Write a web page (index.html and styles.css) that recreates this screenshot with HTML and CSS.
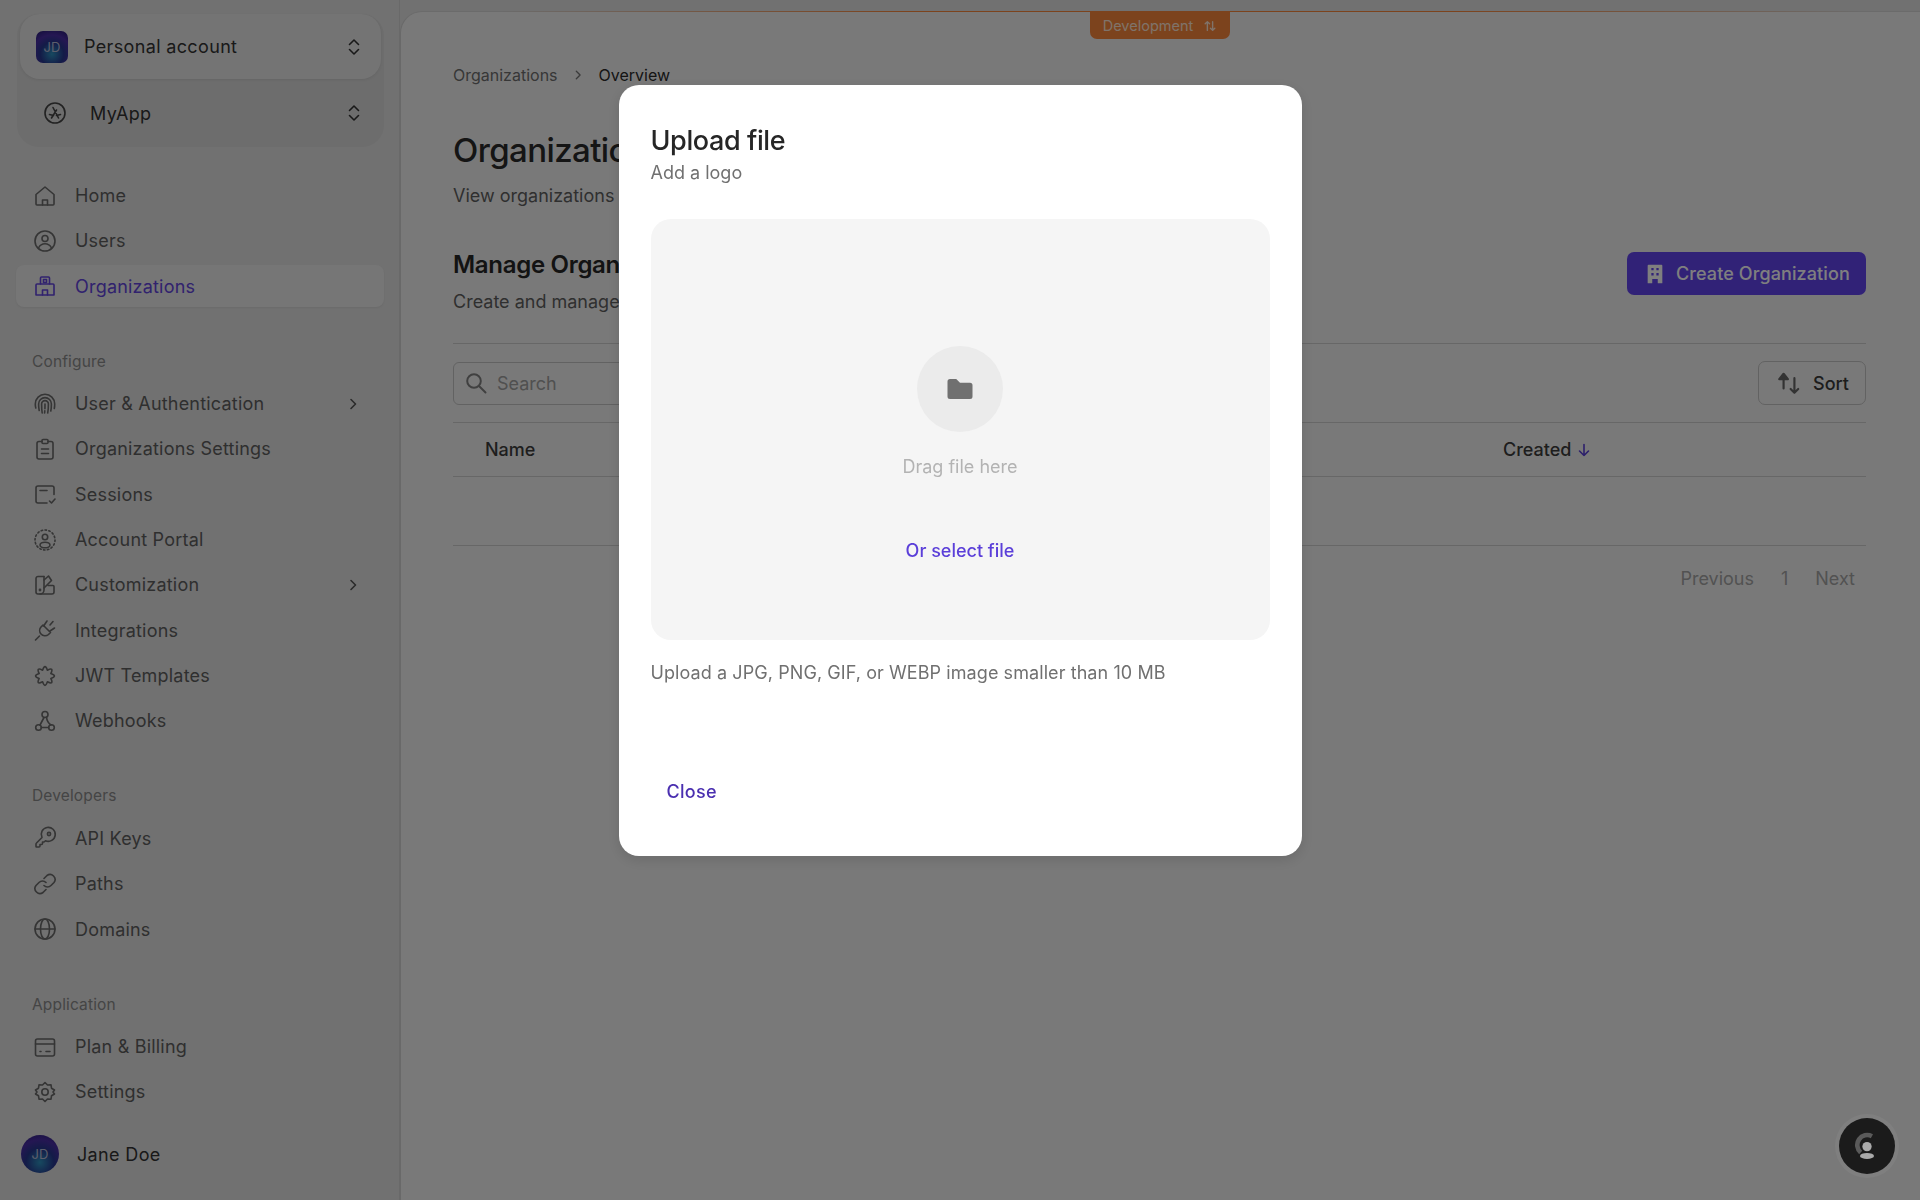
FILE: index.html
```html
<!DOCTYPE html>
<html lang="en">
<head>
    <meta charset="UTF-8">
    <title>Organizations</title>
    <link rel="stylesheet" href="styles.css">
</head>
<body>
<svg class="sprite" width="0" height="0">
    <symbol id="i-updown" viewBox="0 0 16 24"><path d="M3.5 9.5 8 5l4.500 4.500M3.500 14.500 8 19l4.500-4.500"/></symbol>
    <symbol id="i-right" viewBox="0 0 24 24"><path d="m10 7.500 4.500 4.500-4.500 4.500"/></symbol>
</svg>
<aside class="sidebar">
    <div class="switcher">
        <div class="switch-card">
            <span class="avatar square">JD</span>
            <span class="switch-name">Personal account</span>
            <svg class="updown"><use href="#i-updown"/></svg>
        </div>
        <div class="switch-app">
            <svg class="app-icon" viewBox="0 0 24 24"><circle cx="12" cy="12" r="10"/><path d="M10 6.500 15.500 17M13.500 9 8.500 17M6.500 13.500l4 1M17.500 13.500l-4 1"/></svg>
            <span class="switch-name">MyApp</span>
            <svg class="updown"><use href="#i-updown"/></svg>
        </div>
    </div>

    <nav class="nav first">
        <a class="nav-item"><svg viewBox="0 0 24 24"><path d="M3 10.500 12 3l9 7.500V20a1 1 0 0 1-1 1H4a1 1 0 0 1-1-1z"/><path d="M9.500 21v-5h5v5"/></svg>Home</a>
        <a class="nav-item"><svg viewBox="0 0 24 24"><circle cx="12" cy="12" r="10"/><circle cx="12" cy="9.500" r="3"/><path d="M5.500 19c1.500-3 3.800-4.200 6.500-4.200s5 1.200 6.500 4.200"/></svg>Users</a>
        <a class="nav-item active"><svg viewBox="0 0 24 24"><path d="M7.500 10V4a1 1 0 0 1 1-1h7a1 1 0 0 1 1 1v6"/><path d="M3 21V11a1 1 0 0 1 1-1h16a1 1 0 0 1 1 1v10z"/><path d="M9.500 21v-5h5v5"/><rect x="10.500" y="5.500" width="3" height="3"/></svg>Organizations</a>
    </nav>

    <div class="nav-label">Configure</div>
    <nav class="nav">
        <a class="nav-item"><svg viewBox="0 0 24 24"><path d="M2.800 16c-.4-1.300-.5-2.700-.5-4a9.700 9.700 0 0 1 19.400 0c0 1.800-.1 3.200-.4 4.500"/><path d="M6.200 18.500c-.4-2-.6-4.400-.6-6.500a6.400 6.400 0 0 1 12.800 0c0 2.800-.2 5-.6 7"/><path d="M9.200 21c-.4-2.800-.6-5.500-.6-9a3.400 3.400 0 0 1 6.800 0c0 3.200-.2 6.200-.7 9"/><path d="M12 12c0 3 0 5.500-.4 9" stroke-dasharray="5 2"/></svg>User &amp; Authentication<svg class="chev"><use href="#i-right"/></svg></a>
        <a class="nav-item"><svg viewBox="0 0 24 24"><path d="M9 4.500H6a2 2 0 0 0-2 2V20a2 2 0 0 0 2 2h12a2 2 0 0 0 2-2V6.500a2 2 0 0 0-2-2h-3"/><rect x="9" y="2.500" width="6" height="4" rx="1"/><path d="M8.500 12h7M8.500 16.500h7"/></svg>Organizations Settings</a>
        <a class="nav-item"><svg viewBox="0 0 24 24"><path d="M21 12.500V6a2 2 0 0 0-2-2H5a2 2 0 0 0-2 2v13a2 2 0 0 0 2 2h9"/><path d="M7 8.500h7"/><path d="m16.500 19 2 2 3.500-4"/></svg>Sessions</a>
        <a class="nav-item"><svg viewBox="0 0 24 24"><circle class="dotted" cx="12" cy="12" r="10"/><circle cx="12" cy="9" r="2.700"/><ellipse cx="12" cy="17" rx="5" ry="2.800"/></svg>Account Portal</a>
        <a class="nav-item"><svg viewBox="0 0 24 24"><path d="M11 3.500H5a2 2 0 0 0-2 2V19a2 2 0 0 0 2 2h14a2 2 0 0 0 2-2v-5.500a1 1 0 0 0-1-1h-5"/><path d="M11 3.500V17a4 4 0 0 1-4 4"/><path d="m11 15 7.500-7.500-3-4.500L11 7"/><circle cx="7" cy="17" r=".6"/></svg>Customization<svg class="chev"><use href="#i-right"/></svg></a>
        <a class="nav-item"><svg viewBox="0 0 24 24"><path d="m2.500 22 4-4"/><path d="m10 7 7.500 7.500-2 2a5.300 5.300 0 0 1-7.500-.5 5.300 5.300 0 0 1 0-7z"/><path d="m14 3-3.200 4.800M21.500 10l-4.500 3M17 7l3-3.500"/></svg>Integrations</a>
        <a class="nav-item"><svg viewBox="0 0 24 24"><path d="M17.820 9.590Q25 12 17.820 14.410Q21.190 21.190 14.410 17.820Q12 25 9.590 17.820Q2.810 21.190 6.180 14.410Q-1 12 6.180 9.590Q2.810 2.810 9.590 6.180Q12 -1 14.410 6.180Q21.190 2.810 17.820 9.590z"/></svg>JWT Templates</a>
        <a class="nav-item"><svg viewBox="0 0 24 24"><circle cx="12" cy="5.500" r="3"/><circle cx="5.500" cy="18.500" r="2.800"/><circle cx="18.500" cy="18.500" r="2.800"/><path d="M11 8.500 7 16M13.500 8c.3 3.500 2 6.500 4.500 8M8.300 18.500h7.400"/></svg>Webhooks</a>
    </nav>

    <div class="nav-label">Developers</div>
    <nav class="nav">
        <a class="nav-item"><svg viewBox="0 0 24 24"><path d="M9 11.500 3.500 17a1.500 1.500 0 0 0-.5 1v2.500a.5.500 0 0 0 .5.500H6a1 1 0 0 0 1-1v-1.500h1.500a1 1 0 0 0 1-1V16h1.500l1.500-1.200A7 7 0 1 0 9 11.500z"/><circle cx="16" cy="8" r="1.600"/></svg>API Keys</a>
        <a class="nav-item"><svg viewBox="0 0 24 24"><path d="m11 6.500 3-3a5 5 0 0 1 7 7l-3 3a5 5 0 0 1-7 0"/><path d="m13 17.500-3 3a5 5 0 0 1-7-7l3-3a5 5 0 0 1 7 0"/></svg>Paths</a>
        <a class="nav-item"><svg viewBox="0 0 24 24"><circle cx="12" cy="12" r="10"/><ellipse cx="12" cy="12" rx="4.500" ry="10"/><path d="M2 12h20"/></svg>Domains</a>
    </nav>

    <div class="nav-label">Application</div>
    <nav class="nav">
        <a class="nav-item"><svg viewBox="0 0 24 24"><rect x="2.500" y="4" width="19" height="17" rx="2"/><path d="M2.500 9h19M7 16.500h1M13 16.500h4"/></svg>Plan &amp; Billing</a>
        <a class="nav-item"><svg viewBox="0 0 24 24"><path d="M12 2.500 14.500 5l3.500-.200.500 3.400L21.500 10 20 12l1.500 2-3 1.800-.5 3.400-3.500-.200-2.500 2.500-2.500-2.500-3.500.200-.5-3.400L2.500 14 4 12l-1.500-2 3-1.800.5-3.400 3.500.200z"/><circle cx="12" cy="12" r="3.200"/></svg>Settings</a>
    </nav>

    <div class="user">
        <span class="avatar round">JD</span>
        <span class="switch-name">Jane Doe</span>
    </div>
</aside>

<main class="content">
    <div class="breadcrumb">
        <span>Organizations</span>
        <svg class="crumb-chev"><use href="#i-right"/></svg>
        <span class="current">Overview</span>
    </div>
    <h1>Organizations</h1>
    <p class="lead">View organizations in this application</p>

    <div class="manage">
        <div>
            <h2>Manage Organizations</h2>
            <p class="lead small">Create and manage organizations</p>
        </div>
        <button class="btn-primary">
            <svg viewBox="0 0 24 24"><path fill-rule="evenodd" d="M5 2h14a1 1 0 0 1 1 1v19h-5v-4.500H9V22H4V3a1 1 0 0 1 1-1zm3 3.500V8h2.500V5.500zm5.500 0V8H16V5.500zM8 11v2.500h2.500V11zm5.500 0v2.500H16V11z"/></svg>
            Create Organization
        </button>
    </div>

    <div class="toolbar">
        <div class="search">
            <svg viewBox="0 0 24 24"><circle cx="10" cy="10" r="6.800"/><path d="m15 15 6.500 6.500"/></svg>
            <span>Search</span>
        </div>
        <button class="btn-sort">
            <svg viewBox="0 0 24 24"><path d="M7 17V6M3 8.500 7 3.500l4 5z" class="arrow"/><path d="M17 7.500V21M13.500 17.500 17 21l3.500-3.500"/></svg>
            Sort
        </button>
    </div>

    <div class="table-head">
        <span>Name</span>
        <span>Created <svg class="sort-down" viewBox="0 0 16 16"><path d="M8 2.500v11M3.500 9 8 13.500 12.500 9"/></svg></span>
    </div>
    <div class="table-empty"></div>

    <div class="pager">
        <span>Previous</span>
        <span>1</span>
        <span>Next</span>
    </div>

    <div class="env-tag">Development
        <svg viewBox="0 0 16 16"><path d="M5 13V3M2.500 5.500 5 3l2.500 2.500M11 3v10M8.500 10.500 11 13l2.500-2.500"/></svg>
    </div>
</main>

<button class="help">
    <svg viewBox="0 0 24 24"><path class="help-arc" d="M16.200 3.600A8.500 8.500 0 0 0 6.600 17.500"/><circle cx="12" cy="12.500" r="4"/><ellipse cx="12" cy="20.500" rx="6" ry="2.600"/></svg>
</button>

<div class="overlay">
    <section class="modal">
        <h3>Upload file</h3>
        <p class="modal-sub">Add a logo</p>
        <div class="drop">
            <div class="drop-circle">
                <svg viewBox="0 0 24 24"><path d="M2 6a2 2 0 0 1 2-2h5l3 3h8a2 2 0 0 1 2 2v9a2 2 0 0 1-2 2H4a2 2 0 0 1-2-2z"/></svg>
            </div>
            <div class="drop-text">Drag file here</div>
            <a class="drop-link">Or select file</a>
        </div>
        <p class="hint">Upload a JPG, PNG, GIF, or WEBP image smaller than 10 MB</p>
        <a class="close">Close</a>
    </section>
</div>
</body>
</html>
```

FILE: styles.css
```css
* {
    box-sizing: border-box;
}

html, body {
    margin: 0;
    height: 100%;
}

body {
    display: flex;
    height: 1200px;
    overflow: hidden;
    background: #e2e2e2;
    font-family: Inter, "Liberation Sans", sans-serif;
    font-size: 18px;
    color: #444;
}

.sprite {
    position: absolute;
}

svg {
    fill: none;
    stroke: currentColor;
    stroke-width: 1.6;
    stroke-linecap: round;
    stroke-linejoin: round;
    flex: none;
}

/* sidebar */
.sidebar {
    width: 400px;
    flex: none;
    height: 1200px;
    padding: 14px 15px 27px 16px;
    display: flex;
    flex-direction: column;
    border-right: 1px solid #d2d2d2;
}

.switcher {
    height: 133px;
    margin: 0 0 0 1px;
    background: #dadada;
    border-radius: 22px;
}

.switch-card {
    height: 65px;
    margin: 0 3px;
    padding: 0 19px 0 16px;
    display: flex;
    align-items: center;
    background: #e9e9e9;
    border-radius: 20px;
    box-shadow: 0 1px 3px rgba(0, 0, 0, .08);
}

.switch-app {
    height: 68px;
    padding: 0 22px 0 26px;
    display: flex;
    align-items: center;
}

.switch-name {
    color: #333;
    letter-spacing: .35px;
}

.switch-card .switch-name {
    margin-left: 16px;
}

.switch-app .switch-name {
    margin-left: 23px;
}

.app-icon {
    width: 24px;
    height: 24px;
    color: #444;
}

.updown {
    width: 16px;
    height: 24px;
    margin-left: auto;
    color: #333;
}

.avatar {
    display: flex;
    align-items: center;
    justify-content: center;
    flex: none;
    color: #b9bdd8;
    font-size: 13px;
    letter-spacing: 0;
    background: radial-gradient(circle at 50% 72%, #2e93c0 0, #27378f 42%, #4a2ea6 68%, #241a70 100%);
}

.avatar.square {
    width: 32px;
    height: 32px;
    border-radius: 7px;
}

.avatar.round {
    width: 38px;
    height: 38px;
    border-radius: 50%;
}

.nav {
    display: flex;
    flex-direction: column;
    gap: 3.33px;
}

.nav.first {
    margin-top: 27.500px;
}

.nav-item {
    height: 42px;
    padding: 0 20px 0 17px;
    display: flex;
    align-items: center;
    gap: 18px;
    border-radius: 8px;
    letter-spacing: .2px;
    color: #5f5f5f;
}

.nav-item > svg:first-child {
    width: 24px;
    height: 24px;
    color: #6a6a6a;
}

.nav-item.active {
    background: #ececec;
    box-shadow: 0 1px 2px rgba(0, 0, 0, .06);
    color: #6244dd;
}

.nav-item.active > svg:first-child {
    color: #6244dd;
}

.chev {
    width: 24px;
    height: 24px;
    margin-left: auto;
    margin-right: -1px;
    color: #555;
}

.nav-label {
    margin: 44.500px 0 11px 16px;
    height: 20px;
    line-height: 20px;
    font-size: 15.500px;
    letter-spacing: .15px;
    color: #8a8a8a;
}

.dotted {
    stroke-dasharray: 1.500 2.400;
}

.user {
    margin-top: auto;
    padding-left: 5px;
    display: flex;
    align-items: center;
    gap: 18px;
}

/* main panel */
.content {
    position: relative;
    flex: 1;
    margin-top: 11px;
    padding: 0 54px 0 52px;
    background: #f3f3f3;
    border-top: 1px solid #d6d6d6;
    border-left: 1px solid #d2d2d2;
    border-top-left-radius: 22px;
}

.content::before {
    content: "";
    position: absolute;
    top: -1px;
    left: 100px;
    right: 60px;
    height: 1px;
    background: linear-gradient(to right, transparent, #f9863a 30%, #f9863a 70%, transparent);
}

.breadcrumb {
    margin-top: 52px;
    height: 22px;
    display: flex;
    align-items: center;
    gap: 10.500px;
    font-size: 16px;
    color: #6f6f6f;
}

.breadcrumb .current {
    color: #2b2b2b;
}

.crumb-chev {
    width: 20px;
    height: 20px;
    color: #777;
}

h1 {
    margin: 41px 0 0;
    height: 46px;
    line-height: 46px;
    font-size: 33px;
    font-weight: 500;
    letter-spacing: -0.6px;
    color: #2a2a2a;
}

.lead {
    margin: 10px 0 0;
    line-height: 26px;
    color: #5f5f5f;
}

.lead.small {
    margin-top: 6.500px;
}

.manage {
    margin-top: 39px;
    display: flex;
    justify-content: space-between;
    align-items: flex-start;
}

h2 {
    margin: 0;
    height: 34px;
    line-height: 34px;
    font-size: 24px;
    font-weight: 600;
    letter-spacing: -0.3px;
    color: #262626;
}

.btn-primary {
    width: 239px;
    height: 43px;
    margin-top: 4px;
    padding: 0 0 0 16px;
    display: flex;
    align-items: center;
    gap: 9px;
    background: #6244ee;
    border: 0;
    border-radius: 7px;
    font: inherit;
    font-weight: 500;
    letter-spacing: .1px;
    color: #ffffff;
}

.btn-primary svg {
    width: 24px;
    height: 24px;
    padding: 1px;
    fill: #fff;
    stroke: none;
}

.toolbar {
    margin-top: 28.500px;
    padding: 17px 0;
    display: flex;
    justify-content: space-between;
    border-top: 1px solid #cfcfcf;
    border-bottom: 1px solid #cfcfcf;
    height: 80px;
    align-items: center;
}

.search {
    width: 380px;
    height: 43px;
    padding-left: 10px;
    display: flex;
    align-items: center;
    gap: 9px;
    border: 1.500px solid #c4c4c4;
    border-radius: 6px;
    color: #a0a0a0;
}

.search svg {
    width: 24px;
    height: 24px;
    stroke-width: 2;
    color: #808080;
}

.btn-sort {
    width: 108px;
    height: 44px;
    padding: 0 0 0 17px;
    display: flex;
    align-items: center;
    gap: 11px;
    background: transparent;
    border: 1.500px solid #c4c4c4;
    border-radius: 7px;
    font: inherit;
    font-weight: 500;
    color: #3a3a3a;
}

.btn-sort svg {
    width: 26px;
    height: 26px;
    stroke-width: 2;
    color: #666;
}

.arrow {
    fill: currentColor;
}

.table-head {
    height: 54px;
    padding-left: 32px;
    display: grid;
    grid-template-columns: 1018px 1fr;
    align-items: center;
    border-bottom: 1px solid #cfcfcf;
    font-weight: 500;
    color: #3c3c3c;
}

.sort-down {
    width: 16px;
    height: 16px;
    color: #5a3fd6;
    vertical-align: -2px;
}

.table-empty {
    height: 69px;
    border-bottom: 1px solid #cfcfcf;
}

.pager {
    margin-top: 20px;
    padding-right: 11px;
    display: flex;
    justify-content: flex-end;
    gap: 27px;
    line-height: 26px;
    color: #a4a4a4;
}

.env-tag {
    position: absolute;
    top: 0;
    left: 689px;
    width: 140px;
    height: 27px;
    display: flex;
    align-items: center;
    justify-content: center;
    gap: 10px;
    background: #f9863a;
    border-radius: 0 0 7px 7px;
    font-size: 14.500px;
    color: #ffe7d4;
}

.env-tag svg {
    width: 14px;
    height: 14px;
}

.help {
    position: fixed;
    right: 25px;
    bottom: 26px;
    width: 56px;
    height: 56px;
    padding: 14px;
    background: #1b1b1b;
    border: 0;
    border-radius: 50%;
    box-shadow: 0 0 0 4px rgba(255, 255, 255, .05);
    z-index: 3;
}

.help svg {
    width: 28px;
    height: 28px;
    display: block;
    fill: #aaa;
    stroke: none;
}

.help .help-arc {
    fill: none;
    stroke: #5a5a5a;
    stroke-width: 4;
    stroke-linecap: butt;
}

/* modal */
.overlay {
    position: fixed;
    inset: 0;
    z-index: 2;
    display: flex;
    justify-content: center;
    align-items: flex-start;
    padding-top: 85px;
    background: rgba(0, 0, 0, .5);
}

.modal {
    width: 683px;
    height: 771px;
    padding: 32px;
    background: #fff;
    border-radius: 20px;
    box-shadow: 0 4px 14px rgba(0, 0, 0, .12);
}

h3 {
    margin: 6px 0 0;
    height: 36px;
    line-height: 36px;
    font-size: 27px;
    font-weight: 500;
    letter-spacing: -0.4px;
    color: #262626;
}

.modal-sub {
    margin: 1px 0 0;
    line-height: 26px;
    color: #707070;
}

.drop {
    margin-top: 33px;
    height: 421px;
    padding-top: 127px;
    display: flex;
    flex-direction: column;
    align-items: center;
    background: #f5f5f5;
    border-radius: 20px;
}

.drop-circle {
    width: 86px;
    height: 86px;
    display: flex;
    align-items: center;
    justify-content: center;
    background: #ebebeb;
    border-radius: 50%;
}

.drop-circle svg {
    width: 30px;
    height: 30px;
    fill: #707070;
    stroke: none;
}

.drop-text {
    margin-top: 22px;
    line-height: 26px;
    color: #b3b3b3;
}

.drop-link {
    margin-top: 58px;
    line-height: 26px;
    font-weight: 500;
    color: #5b3fd9;
}

.hint {
    margin: 20px 0 0;
    line-height: 26px;
    letter-spacing: .08px;
    color: #707070;
}

.close {
    display: block;
    margin: 93px 0 0 16px;
    line-height: 26px;
    font-weight: 500;
    letter-spacing: .3px;
    color: #4a2fb0;
}
```
